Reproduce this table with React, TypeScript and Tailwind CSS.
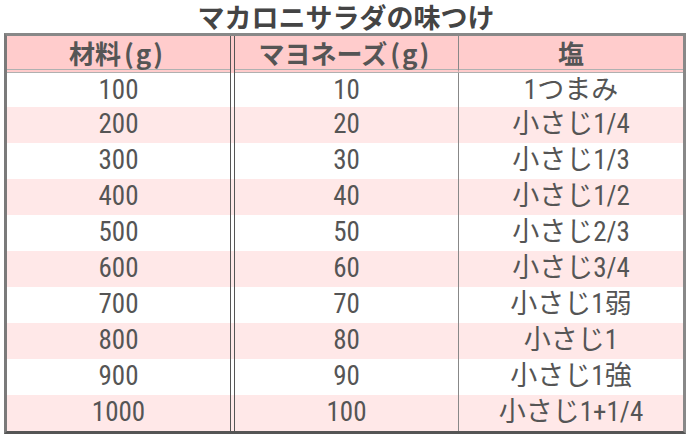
import React from 'react';

const rows: [string, string, string][] = [
  ['100', '10', '1つまみ'],
  ['200', '20', '小さじ1/4'],
  ['300', '30', '小さじ1/3'],
  ['400', '40', '小さじ1/2'],
  ['500', '50', '小さじ2/3'],
  ['600', '60', '小さじ3/4'],
  ['700', '70', '小さじ1弱'],
  ['800', '80', '小さじ1'],
  ['900', '90', '小さじ1強'],
  ['1000', '100', '小さじ1+1/4'],
];

const bodyFont = "font-['Liberation_Sans_Narrow','Roboto_Condensed','Noto_Sans_CJK_JP',sans-serif]";

// "(g)" in the header has wide, airy parentheses
const Gram = () => (
  <span className="px-[3px] tracking-[2px]">(g)</span>
);

export default function App() {
  return (
    <div className="w-[692px] h-[441px] bg-white font-['Noto_Sans_CJK_JP',sans-serif] text-[#555]">
      <h1 className="h-[33px] pt-[1px] text-center text-[27px] font-bold leading-[32px] text-[#444]">マカロニサラダの味つけ</h1>
      <div className="ml-[4px] w-[682px] border-[3px] border-[#888] border-b-[#555] border-l-[#7a7a7a]">
        {/* header */}
        <div className="flex h-[37px] text-[26px] font-bold leading-[33px]">
          <div className="w-[223px] bg-[#ffcccc] border-b-[4px] border-double border-[#b0b0b0] text-center">材料<Gram /></div>
          <div className="w-[5px] bg-[#ffcccc] border-x border-[#555]" />
          <div className="w-[223px] bg-[#ffcccc] border-b-[4px] border-double border-[#b0b0b0] text-center">マヨネーズ<Gram /></div>
          <div className="flex-1 bg-[#ffcccc] border-l border-l-[#888] border-b-[4px] border-double border-b-[#b0b0b0] text-center">塩</div>
        </div>
        {rows.map((r, i) => (
          <div
            key={i}
            className={`flex ${i === 0 ? 'h-[34px]' : 'h-[36px]'} ${i % 2 === 1 ? 'bg-[#ffe8e8]' : 'bg-white'} text-[27px] leading-[34px] ${bodyFont}`}
          >
            <div className="w-[223px] text-center">{r[0]}</div>
            <div className="w-[5px] border-x border-[#555]" />
            <div className="w-[223px] text-center">{r[1]}</div>
            <div className="flex-1 border-l border-[#888] text-center">{r[2]}</div>
          </div>
        ))}
      </div>
    </div>
  );
}
